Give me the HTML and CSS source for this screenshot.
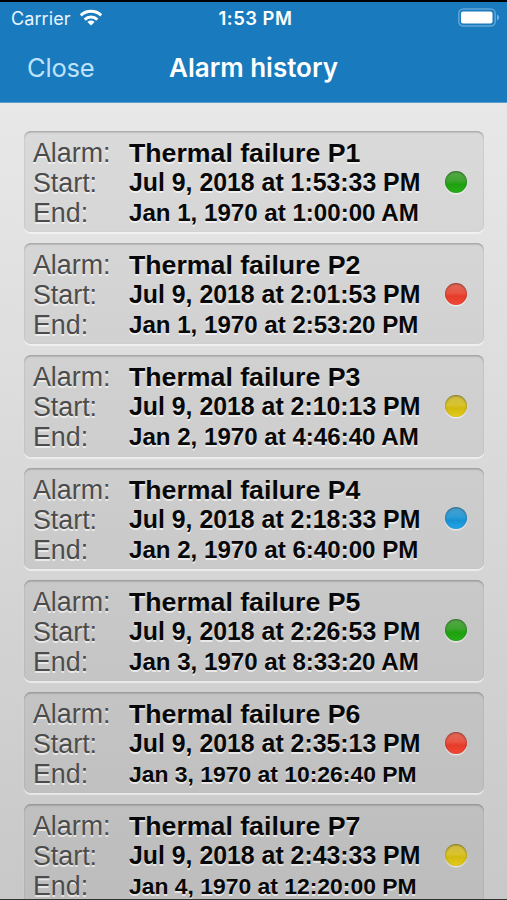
FILE: index.html
```html
<!DOCTYPE html>
<html lang="en">
<head>
<meta charset="utf-8">
<title>Alarm history</title>
<link rel="stylesheet" href="styles.css">
</head>
<body>
<header class="header">
  <div class="status">
    <div class="carrier"><span>Carrier</span>
      <svg class="wifi" width="24" height="18" viewBox="0 0 24 18"><g fill="none" stroke="#fff" stroke-width="3"><path d="M1.8 6.4a14.8 14.8 0 0 1 20.4 0"/><path d="M5.7 10.6a9 9 0 0 1 12.6 0"/></g><path fill="#fff" d="M8.4 13a5.2 5.2 0 0 1 7.2 0L12 16.6z"/></svg>
    </div>
    <div class="clock">1:53 PM</div>
    <svg class="battery" width="42" height="20" viewBox="0 0 42 20"><rect x=".8" y="1" width="36.4" height="17" rx="4.5" fill="none" stroke="#5fa6d6" stroke-width="1.5"/><rect x="3" y="3.5" width="31.5" height="12" rx="2" fill="#fff"/><path fill="#70b2dd" d="M39 6.5q2.2 1 2.2 3t-2.2 3z"/></svg>
  </div>
  <nav class="nav"><span class="close">Close</span><h1 class="title">Alarm history</h1></nav>
</header>
<main class="list">
  <section class="card"><dl class="info"><dt>Alarm:</dt><dd class="name">Thermal failure P1</dd><dt>Start:</dt><dd>Jul 9, 2018 at 1:53:33 PM</dd><dt>End:</dt><dd class="end">Jan 1, 1970 at 1:00:00 AM</dd></dl><i class="led green"></i></section>
  <section class="card"><dl class="info"><dt>Alarm:</dt><dd class="name">Thermal failure P2</dd><dt>Start:</dt><dd>Jul 9, 2018 at 2:01:53 PM</dd><dt>End:</dt><dd class="end">Jan 1, 1970 at 2:53:20 PM</dd></dl><i class="led red"></i></section>
  <section class="card"><dl class="info"><dt>Alarm:</dt><dd class="name">Thermal failure P3</dd><dt>Start:</dt><dd>Jul 9, 2018 at 2:10:13 PM</dd><dt>End:</dt><dd class="end">Jan 2, 1970 at 4:46:40 AM</dd></dl><i class="led yellow"></i></section>
  <section class="card"><dl class="info"><dt>Alarm:</dt><dd class="name">Thermal failure P4</dd><dt>Start:</dt><dd>Jul 9, 2018 at 2:18:33 PM</dd><dt>End:</dt><dd class="end">Jan 2, 1970 at 6:40:00 PM</dd></dl><i class="led blue"></i></section>
  <section class="card"><dl class="info"><dt>Alarm:</dt><dd class="name">Thermal failure P5</dd><dt>Start:</dt><dd>Jul 9, 2018 at 2:26:53 PM</dd><dt>End:</dt><dd class="end">Jan 3, 1970 at 8:33:20 AM</dd></dl><i class="led green"></i></section>
  <section class="card"><dl class="info"><dt>Alarm:</dt><dd class="name">Thermal failure P6</dd><dt>Start:</dt><dd>Jul 9, 2018 at 2:35:13 PM</dd><dt>End:</dt><dd class="end long">Jan 3, 1970 at 10:26:40 PM</dd></dl><i class="led red"></i></section>
  <section class="card"><dl class="info"><dt>Alarm:</dt><dd class="name">Thermal failure P7</dd><dt>Start:</dt><dd>Jul 9, 2018 at 2:43:33 PM</dd><dt>End:</dt><dd class="end long">Jan 4, 1970 at 12:20:00 PM</dd></dl><i class="led yellow"></i></section>
</main>
</body>
</html>
```
FILE: styles.css
```css
* { box-sizing: border-box; }
body {
  margin: 0;
  height: 900px;
  overflow: hidden;
  display: flex;
  flex-direction: column;
  background: linear-gradient(#e8e8e8 103px, #c8c8c8 899px);
  border-top: 2px solid #000;
  border-bottom: 1px solid #333;
  font-family: "Liberation Sans", Arial, sans-serif;
}
.header {
  flex: none;
  height: 101px;
  background: #197bbd;
  border-bottom: 1px solid #5b9dcc;
  color: #fff;
  font-family: Inter, sans-serif;
}
.status {
  height: 32px;
  display: grid;
  grid-template-columns: 1fr auto 1fr;
  align-items: center;
  padding: 0 7px 0 11px;
  font-size: 18px;
}
.carrier { display: flex; align-items: center; gap: 8px; letter-spacing: .1px; color: #e8f5ff; }
.clock { font-weight: 600; font-size: 18.4px; letter-spacing: .5px; }
.battery { justify-self: end; }
.nav {
  height: 67px;
  display: grid;
  grid-template-columns: 1fr auto 1fr;
  align-items: center;
  padding: 0 27px;
}
.close { font-size: 25.5px; letter-spacing: -.2px; color: #bfe2fb; }
.title { margin: 0; font-size: 26px; font-weight: 600; }
.list {
  flex: 1;
  min-height: 0;
  overflow: hidden;
  padding: 28px 23px 0 24px;
  display: flex;
  flex-direction: column;
  gap: 11px;
}
.card {
  flex: none;
  height: 101.2px;
  display: flex;
  justify-content: space-between;
  align-items: center;
  padding: 0 17px 0 9px;
  border-radius: 7px;
  background: rgba(0, 0, 0, .055);
  box-shadow: inset 0 1.5px 1.5px rgba(0, 0, 0, .22), inset 0 0 1px rgba(0, 0, 0, .12), 0 2px 1px rgba(255, 255, 255, .55);
}
.info {
  margin: 0;
  padding-top: 3px;
  display: grid;
  grid-template-columns: 96px auto;
  grid-auto-rows: 30px;
  line-height: 30px;
  white-space: nowrap;
  text-shadow: 0 1.5px 0 rgba(255, 255, 255, .65);
}
.info dt { font-size: 26.8px; color: #4c4c4c; }
.info dd { margin: 0; font-size: 24.85px; font-weight: 700; color: #080808; }
.info .name { font-size: 26.7px; }
.info .end { font-size: 24.1px; }
.info .long { font-size: 22.9px; }
.led {
  width: 22px;
  height: 22px;
  border-radius: 50%;
  box-shadow: inset 0 1px 2px rgba(0, 0, 0, .4), 0 1.5px 1px rgba(255, 255, 255, .6);
}
.green { background: linear-gradient(#57a94b, #3ca52e 45%, #1ea00f 60%, #27ad17); }
.red { background: linear-gradient(#e06a5c, #e95442 45%, #e63b29 60%, #f04a38); }
.yellow { background: linear-gradient(#cdbb45, #d9c32d 45%, #d3ba0e 60%, #e3cc1c); }
.blue { background: linear-gradient(#4a9fcb, #2c9cd6 45%, #1592d3 60%, #25a5e6); }
```
